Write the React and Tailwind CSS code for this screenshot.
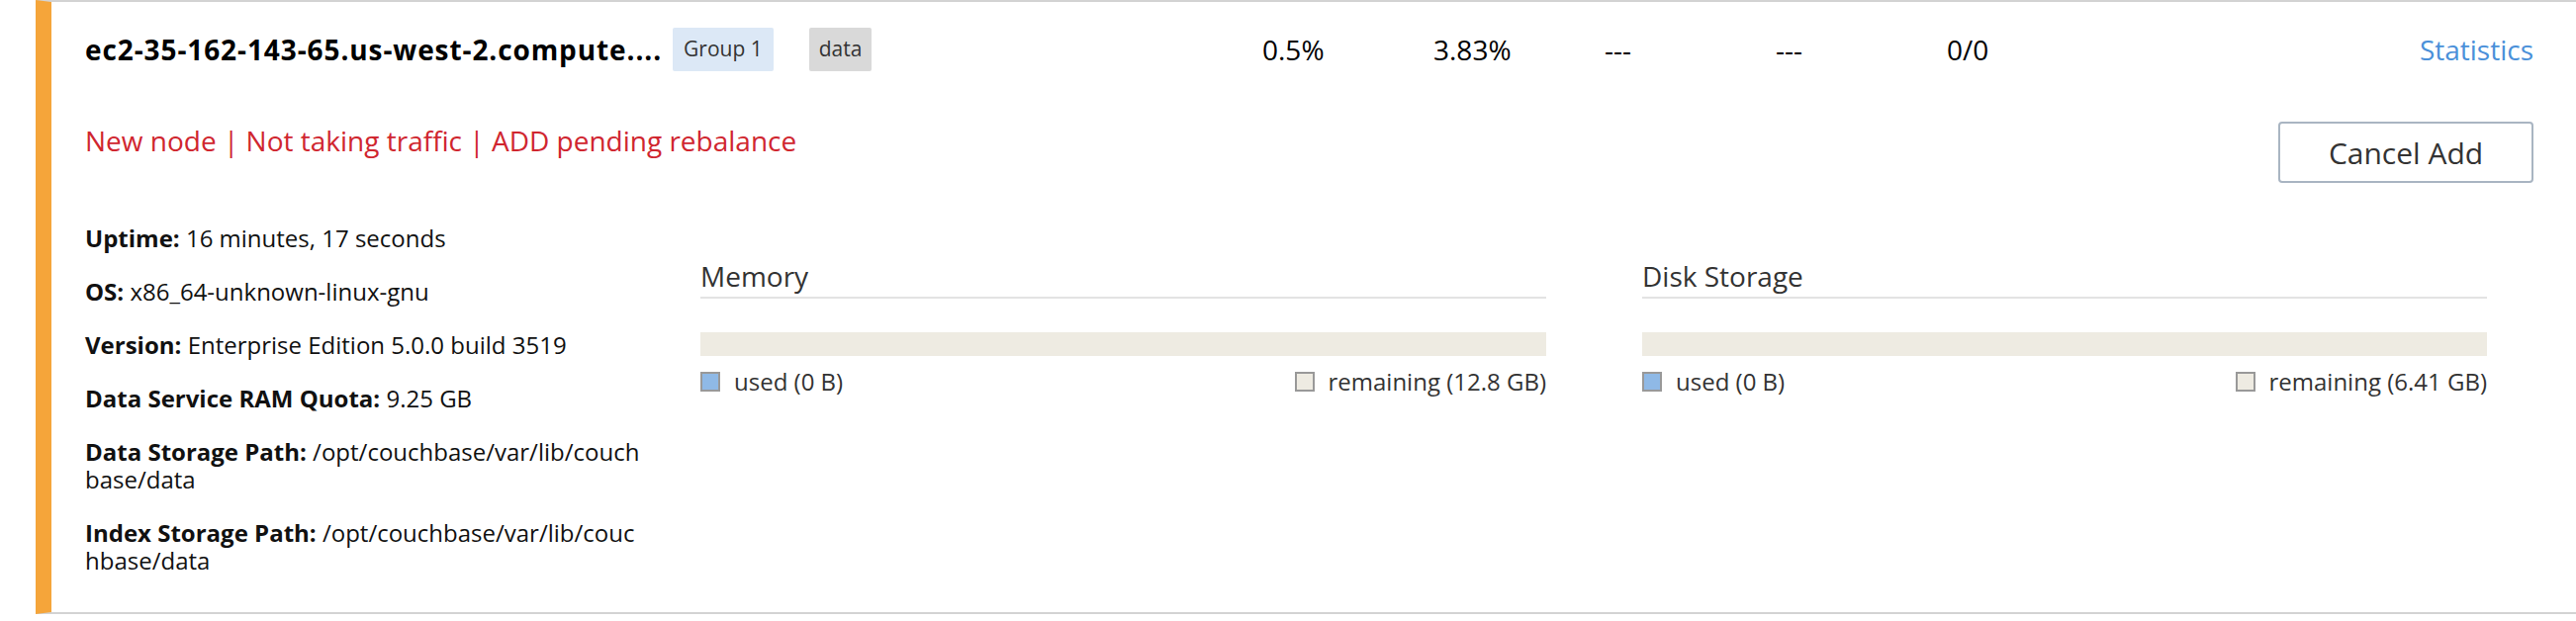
import React from "react";

const stats = ["0.5%", "3.83%", "---", "---", "0/0"];

const details = [
  ["Uptime:", "16 minutes, 17 seconds"],
  ["OS:", "x86_64-unknown-linux-gnu"],
  ["Version:", "Enterprise Edition 5.0.0 build 3519"],
  ["Data Service RAM Quota:", "9.25 GB"],
  ["Data Storage Path:", "/opt/couchbase/var/lib/couchbase/data"],
  ["Index Storage Path:", "/opt/couchbase/var/lib/couchbase/data"],
];

function UsageBar({ title, remaining }) {
  return (
    <div className="flex flex-col">
      <h4 className="text-[28px] leading-[38px] text-[#333] border-b-2 border-[#e3e3e3] pb-[2px]">
        {title}
      </h4>
      <div className="mt-[34px] h-[24px] bg-[#eeebe2]"></div>
      <div className="mt-[12px] flex justify-between items-center text-[24px] leading-[28px] text-[#333]">
        <div className="flex items-center gap-[14px]">
          <span className="w-[20px] h-[20px] bg-[#8fb9e6] border-2 border-[#999]"></span>
          used (0 B)
        </div>
        <div className="flex items-center gap-[14px]">
          <span className="w-[20px] h-[20px] bg-[#eeebe2] border-2 border-[#999]"></span>
          remaining ({remaining})
        </div>
      </div>
    </div>
  );
}

export default function App() {
  return (
    <div className="bg-white w-[2604px] h-[628px] font-['Open_Sans',sans-serif]">
      <div className="ml-[36px] border-l-[16px] border-l-[#f5a53a] border-t-2 border-b-2 border-t-[#d3d3d3] border-b-[#d3d3d3] pl-[34px] pr-[43px] pb-[38px]">
        {/* HEADER */}
        <div className="mt-[26px] flex items-center h-[44px]">
          <div className="w-[1190px] flex items-center">
            <span className="text-[28px] font-bold tracking-[0.9px] text-black whitespace-nowrap">
              ec2-35-162-143-65.us-west-2.compute....
            </span>
            <span className="ml-[11px] h-[44px] px-[11px] flex items-center bg-[#dce8f6] text-[#333] text-[21px] rounded-[2px]">
              Group 1
            </span>
            <span className="ml-[36px] h-[44px] px-[10px] flex items-center bg-[#d9d9d9] text-[#333] text-[21px] rounded-[2px]">
              data
            </span>
          </div>
          {stats.map((s, i) => (
            <div key={i} className="w-[173px] text-[28px] text-black">
              {s}
            </div>
          ))}
          <div className="flex-1 text-right text-[28px] text-[#4a90d9]">Statistics</div>
        </div>

        {/* STATUS */}
        <div className="mt-[51px] flex justify-between items-start">
          <p className="text-[28px] leading-[38px] text-[#d0262f]">
            New node | Not taking traffic | ADD pending rebalance
          </p>
          <button className="w-[258px] h-[62px] border-2 border-[#a9b5c2] rounded-[4px] text-[30px] text-[#333]">
            Cancel Add
          </button>
        </div>

        {/* BODY */}
        <div className="mt-[42px] flex items-start">
          <div className="w-[565px] flex flex-col gap-[26px] text-[24px] leading-[28px] text-[#111] break-all">
            {details.map(([k, v]) => (
              <p key={k}>
                <b className="font-bold">{k}</b> {v}
              </p>
            ))}
          </div>
          <div className="ml-[57px] mt-[33px] w-[855px]">
            <UsageBar title="Memory" remaining="12.8 GB" />
          </div>
          <div className="ml-[97px] mt-[33px] w-[854px]">
            <UsageBar title="Disk Storage" remaining="6.41 GB" />
          </div>
        </div>
      </div>
    </div>
  );
}
